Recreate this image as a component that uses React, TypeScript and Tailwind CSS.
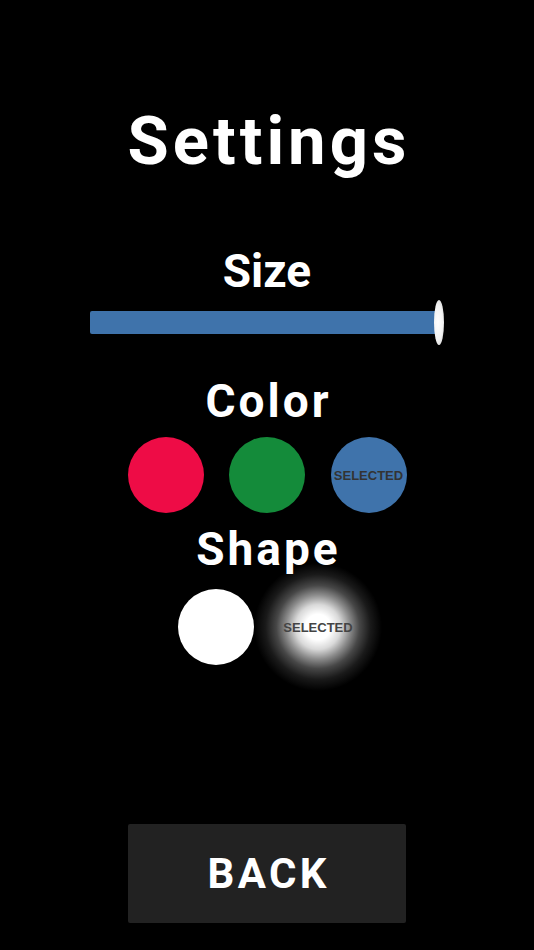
import React from "react";

const heading = "font-['Roboto',sans-serif] font-bold text-white leading-none text-center";

export default function App() {
  return (
    <div className="min-h-[950px] w-full bg-black flex flex-col items-center font-['Roboto',sans-serif]">
      <h1 className={`${heading} text-[67px] mt-[108px] tracking-[4px] pl-[4px]`}>Settings</h1>

      <h2 className={`${heading} text-[46px] mt-[73px]`}>Size</h2>
      <div className="relative mt-[17px] w-[354px] h-[23px]">
        <div className="h-[23px] w-[346px] bg-[#3f73ab] rounded-l-[2px]" />
        <div className="absolute right-[0px] top-[-11px] w-[10px] h-[45px] rounded-[50%] bg-[radial-gradient(ellipse_at_40%_50%,#ffffff_0%,#f2f2f2_55%,#c8c8c8_100%)]" />
      </div>

      <h2 className={`${heading} text-[46px] mt-[44px] tracking-[3px] pl-[3px]`}>Color</h2>
      <div className="mt-[13px] flex gap-[25.5px]">
        <div className="w-[76px] h-[76px] rounded-full bg-[#ee0c46]" />
        <div className="w-[76px] h-[76px] rounded-full bg-[#148b3a]" />
        <div className="w-[76px] h-[76px] rounded-full bg-[#3f73ab] flex items-center justify-center">
          <span className="font-['Liberation_Sans',Arial,sans-serif] font-bold text-[13px] text-[#333] leading-none">SELECTED</span>
        </div>
      </div>

      <h2 className={`${heading} text-[46px] mt-[13px] tracking-[3px] pl-[3px]`}>Shape</h2>
      <div className="mt-[17px] flex gap-[26px]">
        <div className="w-[76px] h-[76px] rounded-full bg-white" />
        <div className="relative w-[76px] h-[76px] flex items-center justify-center">
          <div className="absolute -inset-[26px] bg-[radial-gradient(circle_closest-side,#ffffff_0%,#ffffff_20%,rgba(255,255,255,0.85)_35%,rgba(255,255,255,0.55)_50%,rgba(255,255,255,0.28)_65%,rgba(255,255,255,0.1)_82%,rgba(255,255,255,0)_100%)]" />
          <span className="relative font-['Liberation_Sans',Arial,sans-serif] font-bold text-[13px] text-[#444] leading-none">SELECTED</span>
        </div>
      </div>

      <button className="mt-[159px] w-[278px] h-[99px] bg-[#222222] rounded-[2px] flex items-center justify-center">
        <span className="font-['Roboto',sans-serif] font-bold text-[42px] text-white leading-none tracking-[0.08em] pl-[0.08em]">BACK</span>
      </button>
    </div>
  );
}
